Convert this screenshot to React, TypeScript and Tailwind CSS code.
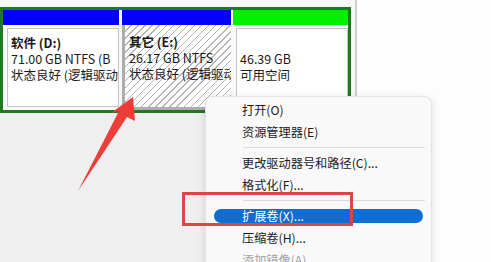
import React from "react";

const font = { fontFamily: '"Noto Sans CJK SC", "Noto Sans", sans-serif' };

type Item = { label: string; active?: boolean; disabled?: boolean } | "sep";

const menuItems: Item[] = [
  { label: "打开(O)" },
  { label: "资源管理器(E)" },
  "sep",
  { label: "更改驱动器号和路径(C)..." },
  { label: "格式化(F)..." },
  "sep",
  { label: "扩展卷(X)...", active: true },
  { label: "压缩卷(H)..." },
  { label: "添加镜像(A)...", disabled: true },
];

function ContextMenu() {
  return (
    <div className="absolute left-[205px] top-[96px] w-[227px] h-[190px] rounded-[8px] bg-[#f9f9f9] border border-[#e3e3e3] shadow-[0_2px_8px_rgba(0,0,0,0.12)] pt-[2px]">
      {menuItems.map((item, i) =>
        item === "sep" ? (
          <div key={i} className="h-[9px] flex items-center pl-[37px] pr-[6px]">
            <div className="h-px w-full bg-[#dadada]" />
          </div>
        ) : (
          <div key={i} className="h-[22px] relative flex items-center">
            {item.active && (
              <div className="absolute left-[8px] right-[8px] top-[4px] h-[14px] rounded-full bg-[#0d6dd1]" />
            )}
            <span
              className={`relative pl-[36px] text-[12.2px] leading-[14px] ${
                item.active ? "text-white" : item.disabled ? "text-[#a3a3a3]" : "text-[#1b1b1b]"
              }`}
            >
              {item.label}
            </span>
          </div>
        )
      )}
    </div>
  );
}

function Lines({ lines, bold }: { lines: string[]; bold?: boolean }) {
  return (
    <div className="pt-[6px] pl-[3px] text-[12.5px] leading-[16px] text-[#1a1a1a] whitespace-nowrap overflow-hidden">
      {lines.map((l, i) => (
        <div key={i} className={i === 0 && bold ? "font-bold" : ""}>
          {l || "\u00a0"}
        </div>
      ))}
    </div>
  );
}

export default function App() {
  return (
    <div className="relative w-[491px] h-[262px] overflow-hidden bg-white" style={font}>
      <div className="flex h-full">
        {/* disk graphic column */}
        <div className="w-[357px] h-full flex flex-col border-r-2 border-[#cdcdcd] bg-[#f0f0f0]">
          <div className="bg-[#f8f8f8] pt-[7px] pr-[4px]">
            <div className="w-[351px] h-[106px] border-[3px] border-[#1f7a22] flex gap-[3px] bg-[#f8f8f8]">
              {/* D: */}
              <div className="w-[116px] flex flex-col">
                <div className="h-[15px] bg-[#0000fc]" />
                <div className="flex-1 pt-[3px] pl-[4px] pb-[3px] bg-[#fafafa]">
                  <div className="h-full border border-[#c4c4c4] bg-white overflow-hidden">
                    <Lines bold lines={["软件  (D:)", "71.00 GB NTFS (B", "状态良好 (逻辑驱动"]} />
                  </div>
                </div>
              </div>
              {/* E: selected */}
              <div className="w-[109px] flex flex-col">
                <div className="h-[15px] bg-[#0000fc]" />
                <div className="flex-1 border-l-[3px] border-b-[3px] border-[#adadad] bg-[repeating-linear-gradient(135deg,#ffffff_0px,#ffffff_4px,#b4b4b4_4px,#b4b4b4_5px)] overflow-hidden">
                  <div className="pt-[3px] pl-[1px]">
                    <Lines bold lines={["其它  (E:)", "26.17 GB NTFS", "状态良好 (逻辑驱动"]} />
                  </div>
                </div>
              </div>
              {/* free */}
              <div className="flex-1 flex flex-col ml-[-1px]">
                <div className="h-[15px] bg-[#00f000]" />
                <div className="flex-1 pt-[3px] pl-[3px] pb-[3px] bg-[#fafafa]">
                  <div className="h-full border border-[#c4c4c4] bg-white overflow-hidden">
                    <Lines lines={["", "46.39 GB", "可用空间"]} />
                  </div>
                </div>
              </div>
            </div>
          </div>
          <div className="flex-1 bg-[#efefef]" />
        </div>
        <div className="flex-1 bg-[#fdfdfd]" />
      </div>

      <ContextMenu />

      {/* annotation: red box */}
      <div className="absolute left-[182px] top-[192px] w-[171px] h-[34px] border-[3px] border-[#de4548]" />

      {/* annotation: red arrow */}
      <svg className="absolute left-0 top-0" width="491" height="262" viewBox="0 0 491 262">
        <polygon
          points="133,97 135,121 127,117 78,191 119,111 111,113"
          fill="#ec3d38"
        />
      </svg>
    </div>
  );
}
